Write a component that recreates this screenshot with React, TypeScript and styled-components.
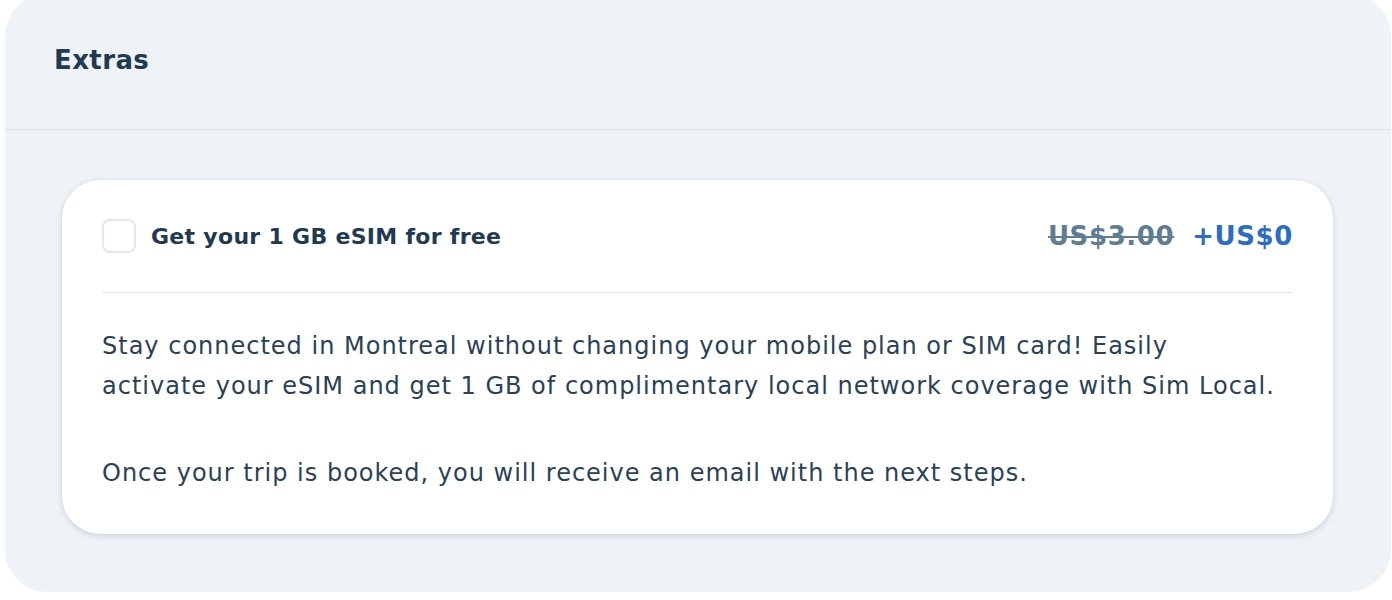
import React from "react";
import styled, {createGlobalStyle} from "styled-components";

const GlobalStyle = createGlobalStyle`
  html, body {
    margin: 0;
    padding: 0;
    background: #ffffff;
    overflow: hidden;
  }
  body {
    font-family: "DejaVu Sans", "Noto Sans", sans-serif;
    color: #1f3a51;
  }
`

const Panel = styled.section`
  margin: -6px 0 0 5px;
  width: 1386px;
  height: 598px;
  box-sizing: border-box;
  background: #eff3f7;
  border-radius: 42px;
  display: flex;
  flex-direction: column;
  overflow: hidden;
`

const PanelHeader = styled.header`
  height: 136px;
  flex: none;
  box-sizing: border-box;
  padding: 0 0 3px 49px;
  display: flex;
  align-items: center;
  border-bottom: 1px solid #dbe3ea;
`

const PanelTitle = styled.h2`
  margin: 0;
  font-size: 26px;
  font-weight: 700;
  color: #1f3a51;
  letter-spacing: 0.4px;
`

const PanelBody = styled.div`
  padding: 50px 58px 0 57px;
`

const Card = styled.div`
  background: #ffffff;
  border-radius: 38px;
  padding: 39px 40px 41px;
  box-shadow: 0 2px 6px rgba(40, 70, 100, 0.18), 0 0 1px rgba(40, 70, 100, 0.12);
`

const CardHeader = styled.div`
  display: flex;
  align-items: center;
  gap: 15px;
  height: 34px;
  padding-bottom: 39px;
  border-bottom: 1px solid #dfe6ec;
`

const Checkbox = styled.span`
  width: 34px;
  height: 34px;
  flex: none;
  box-sizing: border-box;
  border: 2px solid #e1e8ee;
  border-radius: 8px;
  background: #ffffff;
`

const OptionLabel = styled.span`
  flex: 1;
  font-size: 22px;
  font-weight: 700;
  letter-spacing: 0.3px;
  color: #1f3a51;
`

const Prices = styled.div`
  display: flex;
  align-items: center;
  gap: 18px;
  font-size: 26px;
  font-weight: 700;
  letter-spacing: 0.6px;
`

const Price = styled.span<{ $old?: boolean }>`
  color: ${p => p.$old ? '#5e7c92' : '#2a6cc6'};
  text-decoration: ${p => p.$old ? 'line-through' : 'none'};
  text-decoration-thickness: 2px;
`

const Description = styled.div`
  padding-top: 33px;
  font-size: 24px;
  line-height: 40px;
  letter-spacing: 1px;
  color: #2a4156;
`

const Paragraph = styled.p`
  margin: 0;
  white-space: nowrap;
  & + & {
    margin-top: 47px;
  }
`

export default function App() {
  return <>
    <GlobalStyle/>
    <Panel>
      <PanelHeader>
        <PanelTitle>Extras</PanelTitle>
      </PanelHeader>
      <PanelBody>
        <Card>
          <CardHeader>
            <Checkbox role="checkbox" aria-checked={false}/>
            <OptionLabel>Get your 1 GB eSIM for free</OptionLabel>
            <Prices>
              <Price $old>US$3.00</Price>
              <Price>+US$0</Price>
            </Prices>
          </CardHeader>
          <Description>
            <Paragraph>
              Stay connected in Montreal without changing your mobile plan or SIM card! Easily<br/>
              activate your eSIM and get 1 GB of complimentary local network coverage with Sim Local.
            </Paragraph>
            <Paragraph>Once your trip is booked, you will receive an email with the next steps.</Paragraph>
          </Description>
        </Card>
      </PanelBody>
    </Panel>
  </>
}
